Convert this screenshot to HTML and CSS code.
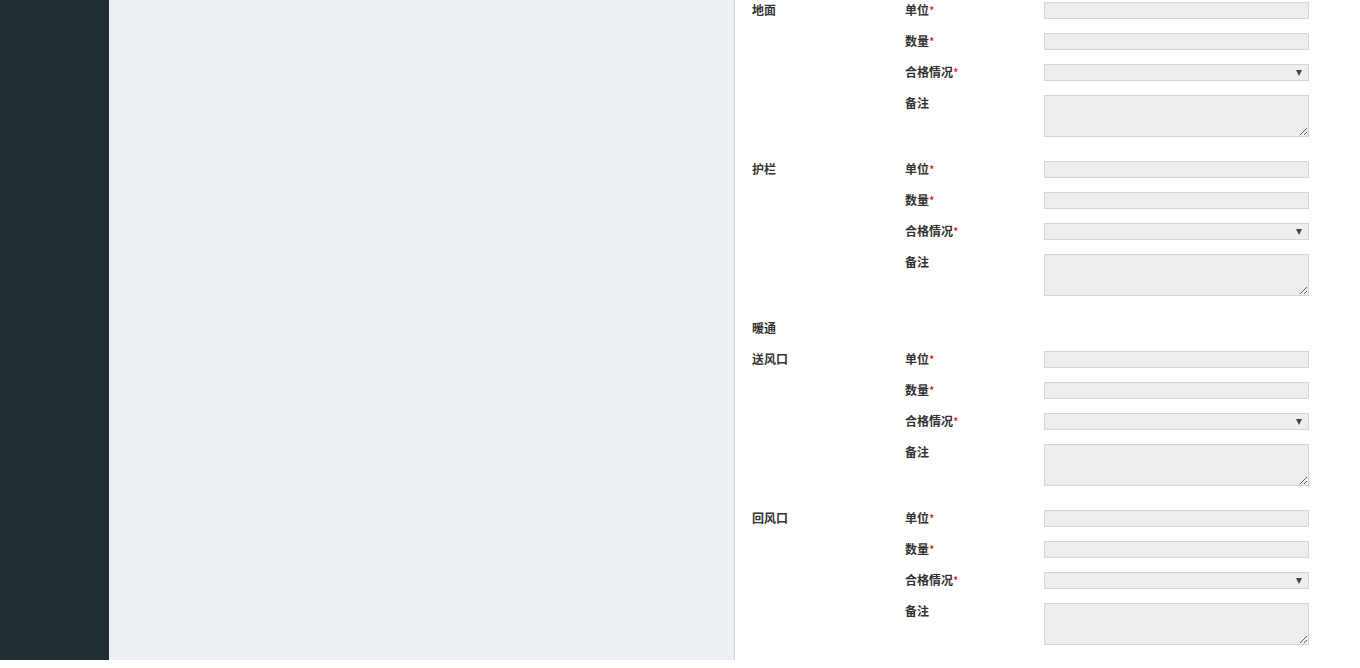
FILE: index.html
```html
<!DOCTYPE html>
<html lang="zh">
<head>
<meta charset="utf-8">
<title>检查</title>
<link rel="stylesheet" href="styles.css">
</head>
<body>
<div class="app">
  <aside class="sidebar"></aside>
  <main class="content"></main>
  <section class="panel">
    <div class="group">
      <div class="group-label">地面</div>
      <div class="fields">
        <div class="field"><label class="flabel">单位<span class="req">*</span></label><input class="ctrl" type="text"></div>
        <div class="field"><label class="flabel">数量<span class="req">*</span></label><input class="ctrl" type="text"></div>
        <div class="field"><label class="flabel">合格情况<span class="req">*</span></label><div class="ctrl sel"><span class="arrow"></span></div></div>
        <div class="field"><label class="flabel">备注</label><textarea class="ctrl area"></textarea></div>
      </div>
    </div>
    <div class="group">
      <div class="group-label">护栏</div>
      <div class="fields">
        <div class="field"><label class="flabel">单位<span class="req">*</span></label><input class="ctrl" type="text"></div>
        <div class="field"><label class="flabel">数量<span class="req">*</span></label><input class="ctrl" type="text"></div>
        <div class="field"><label class="flabel">合格情况<span class="req">*</span></label><div class="ctrl sel"><span class="arrow"></span></div></div>
        <div class="field"><label class="flabel">备注</label><textarea class="ctrl area"></textarea></div>
      </div>
    </div>
    <div class="heading">暖通</div>
    <div class="group">
      <div class="group-label">送风口</div>
      <div class="fields">
        <div class="field"><label class="flabel">单位<span class="req">*</span></label><input class="ctrl" type="text"></div>
        <div class="field"><label class="flabel">数量<span class="req">*</span></label><input class="ctrl" type="text"></div>
        <div class="field"><label class="flabel">合格情况<span class="req">*</span></label><div class="ctrl sel"><span class="arrow"></span></div></div>
        <div class="field"><label class="flabel">备注</label><textarea class="ctrl area"></textarea></div>
      </div>
    </div>
    <div class="group">
      <div class="group-label">回风口</div>
      <div class="fields">
        <div class="field"><label class="flabel">单位<span class="req">*</span></label><input class="ctrl" type="text"></div>
        <div class="field"><label class="flabel">数量<span class="req">*</span></label><input class="ctrl" type="text"></div>
        <div class="field"><label class="flabel">合格情况<span class="req">*</span></label><div class="ctrl sel"><span class="arrow"></span></div></div>
        <div class="field"><label class="flabel">备注</label><textarea class="ctrl area"></textarea></div>
      </div>
    </div>
  </section>
</div>
</body>
</html>
```
FILE: styles.css
```css
html, body {
  margin: 0;
  padding: 0;
  background: #ffffff;
}
body {
  font-family: "Noto Sans CJK SC", "Liberation Sans", sans-serif;
  font-size: 12px;
  color: #333333;
}
.app {
  display: flex;
  height: 660px;
  overflow: hidden;
}
.sidebar {
  width: 109px;
  flex: none;
  background: #222d32;
}
.content {
  width: 625px;
  flex: none;
  background: #ecf0f5;
}
.panel {
  flex: 1;
  background: #ffffff;
  border-left: 1px solid #d2d6de;
  padding: 2px 0 0 17px;
  display: flex;
  flex-direction: column;
}
.group {
  display: flex;
  margin-bottom: 24px;
}
.group-label, .heading {
  width: 153px;
  flex: none;
  font-weight: bold;
  line-height: 16px;
  height: 17px;
}
.heading {
  margin-bottom: 14px;
}
.fields {
  display: flex;
  flex-direction: column;
  gap: 14px;
}
.field {
  display: flex;
  align-items: flex-start;
}
.flabel {
  width: 139px;
  flex: none;
  font-weight: bold;
  line-height: 16px;
}
.req {
  color: #ff0000;
  font-size: 12px;
  font-weight: normal;
  position: relative;
  top: 1px;
}
.ctrl {
  box-sizing: border-box;
  width: 265px;
  height: 17px;
  margin: 0;
  padding: 0 4px;
  background: #eeeeee;
  border: 1px solid #d2d6de;
  border-radius: 0;
  font-family: inherit;
  font-size: 12px;
  outline: none;
  display: block;
}
.sel {
  position: relative;
}
.arrow {
  position: absolute;
  right: 6px;
  top: 5px;
  width: 0;
  height: 0;
  border-left: 3.5px solid transparent;
  border-right: 3.5px solid transparent;
  border-top: 6px solid #444444;
}
.area {
  height: 42px;
  resize: both;
}
```
